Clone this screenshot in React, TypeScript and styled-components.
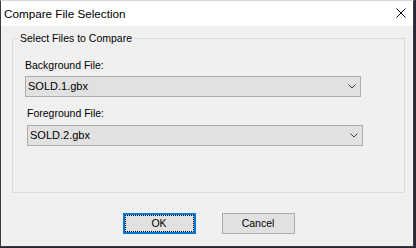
import React from "react";
import styled, { createGlobalStyle } from "styled-components";

const Global = createGlobalStyle`
  html, body { margin: 0; padding: 0; }
  body {
    background: #2b2638;
    width: 416px;
    height: 248px;
    overflow: hidden;
    font-family: "Liberation Sans", Arial, sans-serif;
    color: #000;
  }
`;

const Window = styled.div`
  display: flex;
  flex-direction: column;
  width: 414px;
  height: 247px;
  box-sizing: border-box;
  border: 1px solid #3a3a3a;
  border-top-color: #d8d8d8;
  background: #f0f0f0;
`;

const TitleBar = styled.div`
  display: flex;
  align-items: center;
  justify-content: space-between;
  height: 25px;
  flex: none;
  background: #fff;
  padding: 0 7px 0 3px;
`;

const Title = styled.span`
  font-size: 11.7px;
  line-height: 14px;
`;

const CloseIcon = styled.svg`
  display: block;
  width: 10px;
  height: 10px;
  margin-top: -1px;
`;

const Body = styled.div`
  flex: 1;
  display: flex;
  flex-direction: column;
  padding: 6px 8px 0 11px;
`;

const Group = styled.fieldset`
  margin: 0;
  padding: 0;
  min-width: 0;
  width: 393px;
  box-sizing: border-box;
  border: 1px solid #dcdcdc;
`;

const Legend = styled.legend`
  margin-left: 5px;
  padding: 0 2px;
  font-size: 10.5px;
  line-height: 13px;
`;

const GroupInner = styled.div`
  display: flex;
  flex-direction: column;
  gap: 10px;
  padding: 14px 0 46px 12px;
`;

const FieldBlock = styled.div<{ $shift: number; $gap: number }>`
  display: flex;
  flex-direction: column;
  gap: ${(p) => p.$gap}px;
  margin-left: ${(p) => p.$shift}px;
`;

const Label = styled.label`
  font-size: 10.5px;
  line-height: 13px;
`;

const Combo = styled.div`
  display: flex;
  align-items: center;
  justify-content: space-between;
  width: 336px;
  height: 21px;
  box-sizing: border-box;
  border: 1px solid #adadad;
  background: #e1e1e1;
  padding: 0 4px 0 2px;
  font-size: 11px;
  line-height: 19px;
`;

const Chevron = styled.svg`
  display: block;
  width: 8px;
  height: 5px;
`;

const ButtonRow = styled.div`
  display: flex;
  justify-content: center;
  gap: 26px;
  margin-top: 20px;
`;

const Button = styled.button<{ $default?: boolean }>`
  width: 73px;
  height: 21px;
  box-sizing: border-box;
  margin: 0;
  padding: 0;
  background: #e1e1e1;
  border: ${(p) => (p.$default ? "2px solid #0078d7" : "1px solid #adadad")};
  outline: ${(p) => (p.$default ? "1px dotted #000" : "none")};
  outline-offset: -3px;
  font-family: "Liberation Sans", Arial, sans-serif;
  font-size: 10.5px;
  line-height: 13px;
  color: #000;
`;

function ChevronDown() {
  return (
    <Chevron viewBox="0 0 8 5">
      <polyline points="0.5,0.5 4,4 7.5,0.5" fill="none" stroke="#404040" strokeWidth="1" />
    </Chevron>
  );
}

export default function App() {
  return (
    <>
      <Global />
      <Window>
        <TitleBar>
          <Title>Compare File Selection</Title>
          <CloseIcon viewBox="0 0 10 10">
            <path d="M0.5 0.5 L9.5 9.5 M9.5 0.5 L0.5 9.5" stroke="#000" strokeWidth="1" fill="none" />
          </CloseIcon>
        </TitleBar>
        <Body>
          <Group>
            <Legend>Select Files to Compare</Legend>
            <GroupInner>
              <FieldBlock $shift={0} $gap={4}>
                <Label>Background File:</Label>
                <Combo>
                  <span>SOLD.1.gbx</span>
                  <ChevronDown />
                </Combo>
              </FieldBlock>
              <FieldBlock $shift={2} $gap={5}>
                <Label>Foreground File:</Label>
                <Combo>
                  <span>SOLD.2.gbx</span>
                  <ChevronDown />
                </Combo>
              </FieldBlock>
            </GroupInner>
          </Group>
          <ButtonRow>
            <Button $default>OK</Button>
            <Button>Cancel</Button>
          </ButtonRow>
        </Body>
      </Window>
    </>
  );
}
